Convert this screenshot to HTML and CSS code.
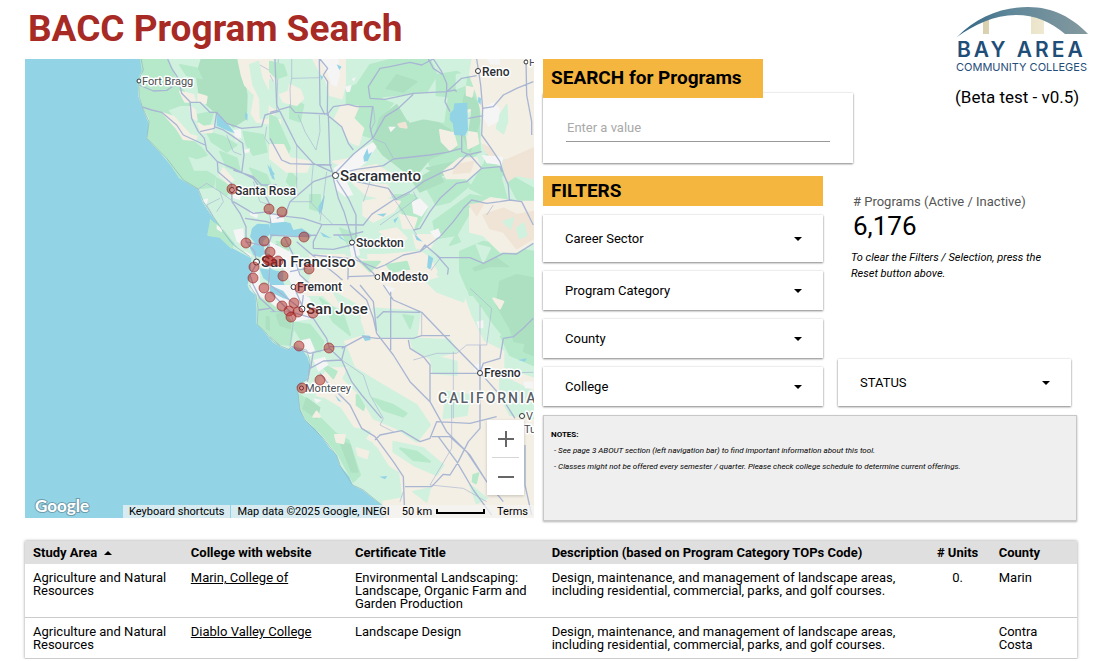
FILE: index.html
```
<!DOCTYPE html>
<html lang="en">
<head>
    <meta charset="UTF-8">
    <meta name="viewport" content="width=device-width, initial-scale=1.0">
    <title>BACC Program Search</title>
    <link rel="stylesheet" href="styles.css">
</head>
<body>

<main class="page">
    <div class="top">
        <div class="map-column">
            <h1>BACC Program Search</h1>

            <div class="map">
                <svg class="map-canvas" viewBox="25 59 509 459" preserveAspectRatio="xMidYMid slice" role="img" aria-label="Map of Northern California colleges">
                    <rect class="water" x="0" y="0" width="700" height="700"/>
                    <!-- coastline -->
                    <path class="land" d="M141 40V59L143 70 138 80 139 97 143 108 149 123 149 130 147 138 160 152 173 167 183 180 198 188 203 202 210 213 212 222 208 235 220 237 233 248 248 256 252 258 251 275 248 285 250 290 256 295 257 308 257 324 265 332 273 342 280 346 287 349 293 347 303 350 308 357 311 367 307 380 302 383 297 388 299 395 300 408 305 420 315 428 323 438 330 448 337 455 340 465 350 477 353 485 363 490 373 498 382 505 388 515 400 540H700V40Z"/>

                    <!-- north west -->
                    <g class="patches" transform="translate(20 55) scale(.33333)">
                        <path class="mid" d="M363 10H440L455 40 470 85 500 120 510 150 480 150 440 165 470 200 500 245 545 280 560 300 530 310 500 300 520 350 560 350 585 365 580 395 535 400 480 368 440 308 385 250 390 190 370 155 358 100 370 60Z"/>
                        <path class="dark" d="M545 12H660L670 60 680 120 678 190 640 215 590 175 540 130 530 60Z"/>
                        <path class="mid" d="M480 30L530 40 545 70 500 60ZM530 180L580 170 570 205 540 215ZM560 230L610 245 650 270 620 290 575 260ZM600 290L650 310 660 350 620 335ZM670 230L730 240 740 290 700 300 680 270ZM690 340L740 360 760 410 715 385ZM590 370L630 395 620 420 590 400ZM575 485L600 515 640 565 635 578 600 545 565 540Z"/>
                        <path class="sand" d="M655 12H757L760 60 765 170 745 205 710 200 695 175 705 120 675 90 665 60ZM430 175L460 185 510 240 530 245 525 255 490 252 470 220ZM480 110L520 120 525 140 495 140ZM535 118L560 125 557 145 535 138ZM510 155L525 165 530 195 515 185ZM535 205L550 215 580 212 575 232 545 232ZM640 230L660 245 650 258ZM760 195L780 195V320L770 290 755 260ZM610 340L640 375 625 385 600 360Z"/>
                        <path class="land" d="M690 30L715 20 725 70 745 110 742 190 722 190 720 130 700 90ZM750 75L768 90 765 160 750 150ZM590 420L620 430 640 480 610 500 590 460Z"/>
                        <path class="city" d="M640 225L662 222 665 250 645 245ZM670 285L690 280 688 292 675 295ZM545 435L565 430 560 448ZM590 510L608 520 605 532 590 522ZM635 400L665 410 660 435 640 430ZM690 465L715 480 710 490 690 480ZM640 525L670 520 672 550 690 560 680 575 650 560ZM670 585L695 600 690 607ZM695 620L718 620 720 690 692 690Z"/>
                        <path class="lake" d="M590 178L605 185 630 215 645 235 625 228 590 212ZM675 172L683 178 682 198 675 190ZM742 328L765 358 752 362ZM696 520L712 506 748 508 752 535 728 560 735 590 752 600 728 610 700 600 690 580 705 565 690 545ZM718 640L755 645 790 650V700L760 690 730 670ZM552 452L572 478 595 510 580 500 560 480ZM605 525L630 555 655 578 630 560Z"/>
                        <path class="coast" d="M363 10L370 45 355 75 358 125 367 157 387 200 381 250 440 310 490 375 535 402 550 440 580 485 610 530 640 570 690 605"/>
                        <path class="road" d="M443 12L455 40 475 70 485 115 510 140 515 190 535 230 553 250 560 285 592 320 594 350 634 385 636 440 660 475 678 515 678 560 704 590 710 625 690 660 700 690M358 90L400 108 440 106 465 90 485 95M367 156L395 165 425 172 470 210 490 240 555 270M510 142L540 142 570 172 590 172 583 220 540 230M583 215L610 225 640 245 668 265 672 300 665 355M590 172L620 205 665 220 725 215 735 180 780 168M592 320L640 340 700 370 740 430 750 450M640 345L700 365 725 390 770 390M560 285L592 320M640 440L700 475 750 470M675 490L740 500 780 515M678 560L720 570 780 570M750 470L755 540 735 600 750 640 745 690"/>
                        <path class="road thin" d="M535 402L560 385 600 410 640 440M600 410L610 440 590 470M580 485L560 450 600 430M740 215L735 250 780 310M775 12L770 165M720 30L755 50 780 50M700 380L720 440 750 450M620 240L640 290 665 300"/>
                    </g>

                    <!-- north east -->
                    <g class="patches" transform="translate(270 55) scale(.33333)">
                        <path class="mid" d="M0 20L40 30 50 60 20 70 0 50ZM60 130L100 150 90 200 60 190ZM0 180L20 190 60 280 40 330 0 250ZM230 100L260 90 300 30 370 12 480 15 500 60 470 110 390 120 330 190 310 250 250 230 230 180ZM500 60L560 50 620 80 625 140 630 290 570 330 480 330 450 240 500 140ZM640 330L690 360 710 430 640 420 600 400ZM370 420L430 420 470 460 440 520 410 500ZM470 400L560 350 600 390 540 440 500 450ZM600 420L660 430 600 470 560 540 500 550 490 500ZM570 590L640 560 790 590V720H600L570 650ZM120 420L150 420 150 470 120 460ZM60 350L80 370 70 400 50 380ZM150 620L190 620 200 660 150 670ZM20 560L60 570 50 600ZM700 350L790 400V460L740 430Z"/>
                        <path class="dark" d="M330 190L380 150 410 200 480 190 540 225 560 280 480 310 430 370 380 330 340 300 310 260ZM380 60L440 80 400 110 350 100ZM590 100L625 150 628 200 600 290 580 240 595 180 580 140ZM430 380L500 340 520 380 450 410ZM610 640L680 610 720 640 700 680 650 690ZM470 340L560 320 520 360Z"/>
                        <path class="sand" d="M608 12H790V305L700 310 680 330 635 260 638 180 622 120 600 60ZM130 12L225 12 225 90 215 130 180 120 170 80 150 50ZM60 90L90 105 100 130 80 150 40 140 30 120 55 110ZM215 150L265 155 250 190 280 220 265 270 240 260 220 220 195 190ZM0 270L40 270 60 310 120 320 110 350 50 350 0 310ZM190 320L250 310 270 340 320 330 350 350 290 370ZM250 385L350 390 370 420 340 430 290 420ZM280 440L340 430 390 440 370 470 310 500 280 480ZM510 225L550 235 560 270 540 285 515 260ZM590 230L620 235 625 265 595 280ZM590 95L610 100 605 125 590 120ZM580 170L600 165 595 190ZM520 350L570 310 620 310 630 340 590 370 530 370ZM120 600L250 600 340 600 450 590 480 610 500 650 480 700 400 720H100L130 650ZM390 480L440 490 430 520 400 520ZM600 460L660 430 740 440 790 440V560L740 590 690 590 640 540 600 530ZM430 540L500 540 480 580 440 580ZM330 530L380 520 410 550 380 570Z"/>
                        <path class="tan" d="M700 320L790 280V370L740 360 710 380ZM640 480L700 460 740 480 790 470V550L740 580 700 530 660 520ZM560 330L610 320 600 350 550 355ZM640 270L660 280 690 320 660 315ZM600 450L640 445 620 480ZM385 208L405 203 410 218 390 215Z"/>
                        <path class="land" d="M560 60L590 55 585 90 560 100ZM690 180L710 150 712 200 700 235 680 220ZM340 130L440 120 530 130 520 200 460 190 420 200 400 150ZM560 180L600 175 590 240 570 230ZM700 500L730 490 720 520ZM740 520L760 505 770 540 750 550ZM620 570L660 580 640 620ZM200 560L280 550 290 610 230 600Z"/>
                        <path class="mid" d="M650 300L680 330 700 360 680 370 640 340ZM210 520L260 540 240 580ZM270 620L330 620 300 650ZM350 630L410 620 420 650 380 670ZM430 650L470 640 460 680ZM540 570L560 540 570 560Z"/>
                        <path class="city" d="M150 12L205 12 210 60 200 95 185 90 170 50ZM225 95L245 90 240 110 230 112ZM640 160L670 140 690 160 685 200 655 215 640 190ZM190 340L220 320 260 290 310 262 320 275 290 320 260 345 200 360ZM190 370L230 380 250 420 225 425 195 400ZM425 440L450 430 475 455 455 485 430 475ZM480 530L505 520 515 545 495 550ZM235 560L265 570 270 600 245 610ZM0 560L60 590 90 650 110 700H70L30 620 0 600ZM355 215L378 215 362 232ZM245 72L257 67 252 80ZM650 12H690V30L660 28ZM635 300L700 305 695 330 650 325ZM0 480L40 480 45 520 10 525ZM310 560L330 560 325 580Z"/>
                        <path class="lake" d="M540 175L550 165 553 145 592 143 594 225 585 242 553 240 548 205 539 195ZM0 505L45 500 62 505 70 525 95 520 125 540 120 548 40 540 0 545ZM0 640L20 650 50 700H0ZM200 28L215 35 208 45ZM150 60L160 65 155 75ZM280 305L292 280 296 298 307 290 293 318 282 320ZM145 455L165 420 158 460 148 480ZM432 535L458 560 440 555ZM475 600L490 610 483 640 470 650ZM625 125L633 130 632 150 624 140ZM0 325L15 375 5 370ZM320 478L350 475 340 485ZM370 495L385 485 375 505ZM150 530L185 550 160 545ZM200 535L230 560 210 550Z"/>
                        <path class="road" d="M15 12L20 150 45 200 80 270 130 325 185 350M0 172L60 155 75 172 175 177 180 330 190 360M148 12L150 150 165 180M150 12L173 40 160 60 173 80 172 180 215 215 235 265 250 285M172 178L190 155 235 148 260 155 308 155 300 215 308 250M300 130L295 95 330 40 360 35 420 22 455 30 490 12M300 130L345 133 430 115 530 110 575 70 620 62M308 250L345 185 385 160 430 118M60 440L130 380 190 360 250 298 308 250M60 440L45 480 20 490M190 360L260 343 340 332 370 312 480 300 530 292 575 280 575 240M0 250L35 315 60 326 185 330M190 370L205 430 222 470 248 560 258 605 310 655 345 705M200 375L235 430 258 480 258 570M0 475L55 485 100 490 155 508 280 510 305 478 370 435 420 410 460 380 520 350 550 340 590 300 635 290M490 12L515 50 530 85 530 110 525 140 540 170M530 110L555 105 560 110M475 12L490 40 520 60M620 12L632 90 638 160 635 240 660 275 690 320 700 355 715 390 718 435M638 160L670 155 700 120 740 100 790 80M768 12L770 120 785 200 785 240M595 190L640 182M575 240L575 290 600 300 635 340 690 335 695 350M635 340L590 380 560 385 510 430 480 470 450 520 430 525M450 590L510 545 550 500 580 460 605 435 650 445 690 440 720 435 755 440 770 470 790 510M190 540L240 540 280 530M155 510L130 560 130 580 190 583 245 570 250 555M130 600L250 612 320 640 345 630M235 665L320 662M345 630L400 600 450 590 465 570 510 608 600 608 640 625 700 595 740 597 790 565M465 570L500 600 535 640 530 680 550 705M260 380L355 400 380 435M235 615L233 705M0 540L80 545 140 540M80 560L150 620 200 660 250 705M40 540L70 600 90 660 140 705M60 650L110 640 140 610"/>
                        <path class="road thin" d="M65 12L65 70 60 100 62 155M65 70L150 68M85 180L105 230 138 285 150 230 148 180M80 270V410M130 325L125 380V440L60 440M430 410L440 430 400 460 330 510M355 400L370 430 400 470 440 540M308 250L345 265 370 310M170 350L160 430 150 500M310 155L315 200 300 230M670 450L650 480M510 610L480 650M380 435L420 415M300 380L280 440M0 60L10 80M120 440L190 510"/>
                    </g>

                    <!-- south west -->
                    <g class="patches" transform="translate(20 285) scale(.33333)">
                        <path class="mid" d="M716 40L780 70V178L738 138 716 118Z"/>
                        <path class="dark" d="M740 95L780 110V150L740 130Z"/>
                        <path class="city" d="M692 0L780 0V75L740 45 708 26 692 12Z"/>
                        <path class="lake" d="M745 0H780V15L760 8Z"/>
                        <path class="coast" d="M688 0L708 30 714 70 712 118 735 140 760 170 780 183"/>
                        <path class="road" d="M700 0L720 40 780 95M715 75L750 70"/>
                    </g>

                    <!-- south east -->
                    <g class="patches" transform="translate(270 285) scale(.33333)">
                        <path class="sand" d="M130 0L200 -10 300 -20 400 -40 470 -50 520 -10 580 30 600 90 640 170 700 200 700 250 790 280V700H345L340 650 400 640 390 560 340 530 310 470 250 440 230 410 170 340 140 330 150 280 180 250 260 250 240 200 225 170 290 150 270 90 190 60Z"/>
                        <path class="mid" d="M2 90L60 60 70 130 60 180 32 176 4 150ZM60 110L120 120 160 170 150 200 110 190ZM90 330L150 370 190 420 230 450 250 510 270 570 250 590 206 510 164 456 110 403 94 370ZM590 -30L660 -50H790V240L720 210 680 130 640 70 610 30ZM260 330L290 340 280 375 260 360ZM380 360L450 380 440 400 380 385ZM390 80L430 85 425 130 395 140 385 110ZM610 570L625 565 618 595 608 590ZM145 230L200 260 190 280ZM150 40L220 90 240 150 190 110Z"/>
                        <path class="dark" d="M690 -10L740 -30 790 -20V210L740 190 720 130 680 60ZM20 90L60 75 60 130 30 120ZM210 470L240 480 262 560 245 560ZM110 340L150 370 140 400 100 370Z"/>
                        <path class="land" d="M190 20L260 60 270 100 230 90ZM240 240L320 290 440 360 480 420 440 470 380 430 310 400 270 330 220 280ZM370 470L460 490 520 540 500 570 430 540 370 500ZM270 450L320 490 390 600 370 630 310 580 260 500ZM420 160L540 165 560 200 480 220 430 190ZM480 210L560 230 560 270 490 265ZM530 320L600 330 590 390 520 400ZM690 270L790 320 790 400 720 390 690 330ZM650 100L690 150 640 150ZM310 70L450 80 440 155 330 155ZM470 -10L540 -30 590 20 580 50 500 20ZM160 340L210 370 250 430 300 440 270 480 200 440 150 390ZM600 600L650 640 620 655ZM430 620L480 610 470 650Z"/>
                        <path class="mid" d="M310 340L370 360 410 385 400 395 340 375ZM400 90L430 95 420 130ZM390 490L440 500 480 530 430 525ZM710 170L760 180 750 220Z"/>
                        <path class="sand" d="M195 450L225 450 220 475 200 470ZM260 490L295 500 290 520 265 510ZM140 380L150 395 130 395ZM670 40L700 50 690 70Z"/>
                        <path class="city" d="M0 0H60L120 40 135 100 70 110 30 70 0 40ZM75 170L120 160 135 195 120 215 95 190ZM130 225L165 215 175 240 145 260ZM610 240L635 235 640 262 615 262ZM340 0L375 10 360 30ZM620 110L640 105 640 130 625 130ZM130 340L155 345 140 355ZM760 290L790 290V310H765Z"/>
                        <path class="lake" d="M275 150L300 152 302 165 285 168ZM0 0L40 18 60 45 40 40 0 20ZM328 575L352 573 345 583ZM195 330L215 350 205 348ZM745 225L770 220 765 230Z"/>
                        <path class="coast" d="M0 155L30 182 55 193 65 185 110 195 120 230 115 280 82 305 90 375 105 405 160 460 200 512 212 545 248 600 280 615 335 660 350 700"/>
                        <path class="road" d="M240 0L290 45 310 100 320 145 370 210 420 290 480 350 530 440 600 510 650 590 700 650M270 0L310 50 320 140M340 0L370 45 455 82 540 170 630 262 690 330 735 400M0 20L60 80 130 100 170 160 178 190 215 225 245 290 275 330 335 400M0 0L90 70M70 0L95 60M178 185L225 185 215 225 160 228 120 250 112 290M215 190L280 155 320 160 430 160 455 152 540 152M320 100L340 80 450 82M362 20V195M130 200L122 250M65 185L120 205 180 190M415 165L420 190 460 215 480 240V350M480 265H630M630 180V430L595 470 565 530 540 570 520 568 485 605H405M630 262L640 235 690 220 700 160 730 155 760 130 790 100M150 265L170 290 240 360 275 430 315 455 370 530 400 575 403 660M315 465L330 450 395 437 450 470 480 460 500 410 600 415 680 395M485 455H540M505 455L560 530 610 615 665 690M765 480V600L785 690M540 455L590 500 650 590M100 30L95 70"/>
                        <path class="road thin" d="M215 225L280 270 300 330 340 400 330 420 370 440M430 225L500 205 560 205 590 180 650 180 665 70 600 10M455 85V150M545 360V490L480 600 580 610 650 650M630 60V180M0 80L60 80 70 110 60 185M550 200V400M630 265L790 262M400 620L390 650"/>
                    </g>

                    <!-- place labels -->
                    <g class="dots">
                        <circle cx="139" cy="81" r="2"/>
                        <circle cx="478" cy="71" r="2.5"/>
                        <circle cx="526" cy="62" r="2"/>
                        <circle cx="335.5" cy="175.5" r="3"/>
                        <circle cx="232" cy="190" r="2.5"/>
                        <circle cx="352" cy="242.5" r="2.5"/>
                        <circle cx="256.5" cy="262" r="3"/>
                        <circle cx="293.5" cy="287" r="2.5"/>
                        <circle cx="302" cy="309" r="3"/>
                        <circle cx="377.5" cy="277" r="2.5"/>
                        <circle cx="480" cy="373" r="2.5"/>
                        <circle cx="301.5" cy="388" r="2"/>
                        <circle cx="522" cy="416" r="2.5"/>
                    </g>
                    <g class="places">
                        <text class="town" x="142" y="85">Fort Bragg</text>
                        <text x="482" y="76">Reno</text>
                        <text class="town" x="529" y="66">F</text>
                        <text class="metro" x="340" y="181">Sacramento</text>
                        <text x="235" y="195">Santa Rosa</text>
                        <text x="356" y="247">Stockton</text>
                        <text class="metro" x="261" y="267">San Francisco</text>
                        <text x="297" y="291">Fremont</text>
                        <text class="metro" x="306" y="314">San Jose</text>
                        <text x="381" y="281">Modesto</text>
                        <text x="484" y="377">Fresno</text>
                        <text class="town" x="305" y="392">Monterey</text>
                        <text class="state" x="438" y="403">CALIFORNIA</text>
                        <text class="town" x="526" y="420">V</text>
                        <text class="town" x="524" y="433">Tu</text>
                    </g>

                    <!-- colleges -->
                    <g class="pins">
                        <circle cx="232" cy="189" r="5"/>
                        <circle cx="269" cy="209" r="5"/>
                        <circle cx="282" cy="212" r="5"/>
                        <circle cx="246" cy="243" r="5"/>
                        <circle cx="264" cy="241" r="5"/>
                        <circle cx="286" cy="242" r="5"/>
                        <circle cx="304" cy="237" r="5"/>
                        <circle cx="270" cy="252" r="5"/>
                        <circle cx="270" cy="261" r="5"/>
                        <circle cx="268" cy="260" r="5"/>
                        <circle cx="278" cy="261" r="5"/>
                        <circle cx="254" cy="267" r="5"/>
                        <circle cx="253" cy="278" r="5"/>
                        <circle cx="309" cy="269" r="5"/>
                        <circle cx="283" cy="276" r="5"/>
                        <circle cx="264" cy="288" r="5"/>
                        <circle cx="300" cy="288" r="5"/>
                        <circle cx="270" cy="297" r="5"/>
                        <circle cx="282" cy="306" r="5"/>
                        <circle cx="294" cy="303" r="5"/>
                        <circle cx="289" cy="311" r="5"/>
                        <circle cx="298" cy="312" r="5"/>
                        <circle cx="291" cy="317" r="5"/>
                        <circle cx="313" cy="313" r="5"/>
                        <circle cx="299" cy="346" r="5"/>
                        <circle cx="329" cy="348" r="5"/>
                        <circle cx="320" cy="380" r="5"/>
                        <circle cx="302" cy="388" r="5"/>
                    </g>
                </svg>

                <div class="map-zoom">
                    <button type="button" aria-label="Zoom in"><svg viewBox="0 0 16 16"><path d="M8 0V16M0 8H16"/></svg></button>
                    <button type="button" aria-label="Zoom out"><svg viewBox="0 0 16 16"><path d="M0 8H16"/></svg></button>
                </div>
                <span class="map-logo">Google</span>
                <div class="map-credits">
                    <button type="button">Keyboard shortcuts</button>
                    <div class="credit">
                        <span>Map data ©2025 Google, INEGI</span>
                        <span class="scale">50 km<span class="scale-bar"></span></span>
                        <a href="#">Terms</a>
                    </div>
                </div>
            </div>
        </div>

        <div class="side">
            <div class="side-head">
                <section class="search">
                    <h2><label for="search">SEARCH for Programs</label></h2>
                    <div class="card search-card">
                        <input type="text" id="search" name="search" placeholder="Enter a value">
                    </div>
                </section>

                <div class="brand">
                    <svg class="brand-logo" viewBox="0 0 137 66" role="img" aria-label="Bay Area Community Colleges">
                        <defs>
                            <linearGradient id="arch">
                                <stop offset="0" stop-color="#2f6485"/>
                                <stop offset=".4" stop-color="#5f8799"/>
                                <stop offset="1" stop-color="#84999f"/>
                            </linearGradient>
                            <linearGradient id="tower">
                                <stop offset="0" stop-color="#d9d0ae"/>
                                <stop offset="1" stop-color="#efe9d2"/>
                            </linearGradient>
                        </defs>
                        <path fill="url(#tower)" d="M28 13H34V27H28ZM76 8H89V27H76Z"/>
                        <path fill="url(#arch)" d="M2 30C22 10 46 0 73 0C98 0 118 11 133 27H110C96 15 80 8 61 8C39 8 19 18 2 30Z"/>
                        <text class="logo-name" x="2" y="50">BAY AREA</text>
                        <text class="logo-sub" x="1" y="64">COMMUNITY COLLEGES</text>
                    </svg>
                    <p>(Beta test - v0.5)</p>
                </div>
            </div>

            <div class="controls">
                <section class="filters">
                    <h2>FILTERS</h2>
                    <div class="card select tall">
                        <select aria-label="Career Sector"><option>Career Sector</option></select>
                    </div>
                    <div class="card select">
                        <select aria-label="Program Category"><option>Program Category</option></select>
                    </div>
                    <div class="card select">
                        <select aria-label="County"><option>County</option></select>
                    </div>
                    <div class="card select">
                        <select aria-label="College"><option>College</option></select>
                    </div>
                </section>

                <section class="summary">
                    <div class="count-label"># Programs (Active / Inactive)</div>
                    <div class="count">6,176</div>
                    <p class="hint">To clear the Filters / Selection, press the Reset button above.</p>
                    <div class="card select tall status">
                        <select aria-label="Status"><option>STATUS</option></select>
                    </div>
                </section>
            </div>

            <section class="notes">
                <h3>NOTES:</h3>
                <p>- See page 3 ABOUT section (left navigation bar) to find important information about this tool.</p>
                <p>- Classes might not be offered every semester / quarter. Please check college schedule to determine current offerings.</p>
            </section>
        </div>
    </div>

    <table class="programs">
        <colgroup>
            <col class="col-area">
            <col class="col-college">
            <col class="col-title">
            <col class="col-desc">
            <col class="col-units">
            <col class="col-county">
        </colgroup>
        <thead>
            <tr>
                <th>Study Area <span class="sort"></span></th>
                <th>College with website</th>
                <th>Certificate Title</th>
                <th>Description (based on Program Category TOPs Code)</th>
                <th class="units"># Units</th>
                <th>County</th>
            </tr>
        </thead>
        <tbody>
            <tr>
                <td>Agriculture and Natural Resources</td>
                <td><a href="#">Marin, College of</a></td>
                <td>Environmental Landscaping: Landscape, Organic Farm and Garden Production</td>
                <td>Design, maintenance, and management of landscape areas, including residential, commercial, parks, and golf courses.</td>
                <td class="units">0.</td>
                <td>Marin</td>
            </tr>
            <tr>
                <td>Agriculture and Natural Resources</td>
                <td><a href="#">Diablo Valley College</a></td>
                <td>Landscape Design</td>
                <td>Design, maintenance, and management of landscape areas, including residential, commercial, parks, and golf courses.</td>
                <td class="units"></td>
                <td>Contra Costa</td>
            </tr>
        </tbody>
    </table>
</main>

</body>
</html>
```
FILE: styles.css
```
* {
    box-sizing: border-box;
}
body {
    margin: 0;
    font-family: Roboto, "Liberation Sans", sans-serif;
    color: #000;
    background: #fff;
}
h1, h2, h3, p {
    margin: 0;
}
.page {
    padding: 0 23px 0 25px;
}

/* top area */
.top {
    display: grid;
    grid-template-columns: 509fr 548fr;
    gap: 9px;
    margin-right: -14px;
}
h1 {
    height: 59px;
    padding-left: 3px;
    font-size: 37px;
    line-height: 58px;
    font-weight: bold;
    color: #a82a25;
    white-space: nowrap;
}

/* map */
.map {
    position: relative;
    height: 459px;
    overflow: hidden;
}
.map-canvas {
    display: block;
    width: 100%;
    height: 100%;
}
.water, .lake { fill: #92d4e6; }
.land { fill: #d1f1df; stroke: #d1f1df; }
.mid { fill: #b6e9ca; stroke: #b6e9ca; }
.dark { fill: #ade0c1; stroke: #ade0c1; }
.sand { fill: #f4efe4; stroke: #f4efe4; }
.tan { fill: #efe4d5; stroke: #efe4d5; }
.city { fill: #f5f5f6; }
.patches path {
    stroke-width: 6;
    stroke-linejoin: round;
}
.patches .coast {
    fill: none;
    stroke: #8fb5b8;
    stroke-width: 2;
}
.patches .road {
    fill: none;
    stroke: #a9b6d3;
    stroke-width: 4;
}
.patches .thin {
    stroke-width: 2;
}
.dots circle {
    fill: #fff;
    stroke: #333;
    stroke-width: 1;
}
.places text {
    font-size: 12px;
    font-weight: 500;
    fill: #2b2e33;
    stroke: #fff;
    stroke-width: 3px;
    stroke-linejoin: round;
    paint-order: stroke;
}
.places .town {
    font-size: 11px;
    font-weight: 400;
    fill: #4a4e52;
}
.places .metro {
    font-size: 15px;
}
.places .state {
    font-size: 14px;
    letter-spacing: 2px;
    fill: #5a5f68;
}
.pins circle {
    fill: rgba(176, 38, 32, 0.5);
    stroke: rgba(150, 30, 28, 0.6);
    stroke-width: 1;
}
.map-zoom {
    position: absolute;
    right: 10px;
    bottom: 23px;
    width: 37px;
    padding: 0 5px;
    background: #fff;
    box-shadow: 0 1px 3px rgba(0, 0, 0, 0.2);
}
.map-zoom button {
    display: flex;
    align-items: center;
    justify-content: center;
    width: 100%;
    height: 37px;
    padding: 0;
    border: none;
    background: none;
    cursor: pointer;
}
.map-zoom button + button {
    height: 38px;
    border-top: 1px solid #d6d6d6;
}
.map-zoom svg {
    width: 16px;
    height: 16px;
    fill: none;
    stroke: #666;
    stroke-width: 2;
}
.map-logo {
    position: absolute;
    left: 10px;
    bottom: 2px;
    font-family: Lato, sans-serif;
    font-size: 17px;
    line-height: 20px;
    font-weight: bold;
    color: #fff;
    -webkit-text-stroke: 2px #6f9dab;
    paint-order: stroke;
}
.map-credits {
    position: absolute;
    right: 0;
    bottom: 0;
    display: flex;
    gap: 1px;
    font-size: 11px;
    line-height: 13px;
    white-space: nowrap;
}
.map-credits button,
.credit {
    padding: 0 6px;
    border: none;
    background: rgba(245, 245, 245, 0.7);
    font: inherit;
    color: #000;
}
.credit {
    display: flex;
    gap: 12px;
}
.credit a {
    color: #000;
    text-decoration: none;
}
.scale {
    display: flex;
    align-items: center;
    gap: 4px;
}
.scale-bar {
    width: 49px;
    height: 5px;
    border: 2px solid #000;
    border-top: none;
}

/* search, filters */
.side-head {
    display: flex;
    justify-content: space-between;
}
h2 {
    position: relative;
    height: 30px;
    padding-left: 8px;
    font-size: 19px;
    line-height: 30px;
    font-weight: bold;
    background: #f4b63f;
}
.card {
    background: #fff;
    box-shadow: 0 1px 2px rgba(0, 0, 0, 0.45), 0 0 2px rgba(0, 0, 0, 0.12);
}
.search {
    width: 310px;
    padding-top: 59px;
}
.search h2 {
    width: 220px;
    height: 39px;
    line-height: 37px;
}
.search-card {
    margin-top: -5px;
    padding: 21px 23px;
}
.search-card input {
    display: block;
    width: 100%;
    height: 28px;
    padding: 0 1px;
    border: none;
    border-bottom: 1px solid #999;
    outline: none;
    font: inherit;
    font-size: 13px;
}
.search-card input::placeholder {
    color: #a9a9a9;
}
.brand {
    width: 136px;
    padding-top: 7px;
}
.brand-logo {
    display: block;
    width: 137px;
    height: 66px;
}
.logo-name {
    font-family: Inter, sans-serif;
    font-size: 21px;
    font-weight: 600;
    letter-spacing: 3px;
    fill: #1f4e79;
}
.logo-sub {
    font-family: Inter, sans-serif;
    font-size: 11px;
    fill: #1f4e79;
}
.brand p {
    padding-top: 14px;
    font-size: 17px;
    line-height: 20px;
    white-space: nowrap;
}
.controls {
    display: flex;
    gap: 15px;
    margin-top: 13px;
}
.filters {
    display: flex;
    flex-direction: column;
    gap: 9px;
    width: 280px;
}
.select {
    position: relative;
    height: 39px;
}
.select::after {
    content: "";
    position: absolute;
    right: 21px;
    top: 50%;
    margin-top: -2px;
    border: 4px solid transparent;
    border-top-color: #000;
    border-bottom: none;
    pointer-events: none;
}
.tall {
    height: 47px;
}
.select select {
    appearance: none;
    width: 100%;
    height: 100%;
    padding: 0 40px 0 22px;
    border: none;
    background: none;
    font: inherit;
    font-size: 13px;
    color: #000;
}
.summary {
    display: flex;
    flex-direction: column;
    width: 233px;
    padding-top: 16px;
}
.count-label {
    padding-left: 15px;
    font-size: 13px;
    line-height: 20px;
    color: #555;
    white-space: nowrap;
}
.count {
    padding-left: 15px;
    font-size: 26px;
    line-height: 28px;
}
.hint {
    padding: 10px 20px 0 13px;
    font-size: 11px;
    line-height: 16px;
    font-style: italic;
}
.status {
    margin-top: auto;
}
.notes {
    height: 106px;
    margin: 9px 14px 0 0;
    padding: 11px 7px;
    border: 1px solid #c8c8c8;
    background: #efefef;
    box-shadow: 0 1px 2px rgba(0, 0, 0, 0.3);
    font-size: 8px;
    line-height: 16px;
}
.notes h3 {
    font-size: 8px;
}
.notes p {
    padding-left: 3px;
    font-style: italic;
}

/* results */
.programs {
    width: 100%;
    margin-top: 20px;
    border-collapse: collapse;
    table-layout: fixed;
    font-size: 13px;
    line-height: 13px;
    box-shadow: 0 0 3px rgba(0, 0, 0, 0.4);
}
.col-area { width: 15%; }
.col-college { width: 15.6%; }
.col-title { width: 18.7%; }
.col-desc { width: 36.2%; }
.col-units { width: 6.3%; }
.col-county { width: 8.2%; }
.programs th {
    height: 23px;
    padding: 0 0 0 8px;
    text-align: left;
    background: #dfdfdf;
}
.programs td {
    padding: 7px 7px 7px 8px;
    vertical-align: top;
    border-bottom: 1px solid #ccc;
}
.programs .units {
    padding-left: 0;
    padding-right: 0;
    text-align: center;
}
.programs a {
    color: #000;
}
.sort {
    display: inline-block;
    margin-left: 4px;
    border: 4px solid transparent;
    border-bottom-color: #000;
    border-top: none;
    vertical-align: 2px;
}
```
